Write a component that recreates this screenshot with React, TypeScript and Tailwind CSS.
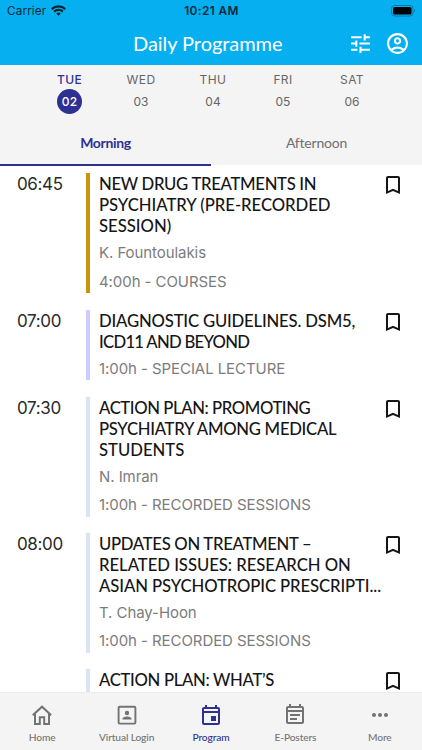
import type { ReactNode } from "react"
import {
  MdBookmarkBorder,
  MdMoreHoriz,
  MdOutlineAccountCircle,
  MdOutlineEvent,
  MdOutlineEventNote,
  MdTune,
} from "react-icons/md"
import { clsx } from "clsx"

type TitleLine = { text: string; tracking?: string }

type Session = {
  time?: string
  bar: string
  title: TitleLine[]
  speaker?: string
  info?: string
}

const days = [
  { name: "TUE", date: "02", width: "w-[71px]" },
  { name: "WED", date: "03", width: "w-[72px]" },
  { name: "THU", date: "04", width: "w-[72px]" },
  { name: "FRI", date: "05", width: "w-[68px]" },
  { name: "SAT", date: "06", width: "w-[70px]" },
]

const sessions: Session[] = [
  {
    time: "06:45",
    bar: "bg-[#c8960c]",
    title: [
      { text: "NEW DRUG TREATMENTS IN", tracking: "tracking-[-0.3px]" },
      { text: "PSYCHIATRY (PRE-RECORDED", tracking: "tracking-[-0.03px]" },
      { text: "SESSION)" },
    ],
    speaker: "K. Fountoulakis",
    info: "4:00h - COURSES",
  },
  {
    time: "07:00",
    bar: "bg-[#ccccff]",
    title: [
      { text: "DIAGNOSTIC GUIDELINES. DSM5,", tracking: "tracking-[-0.18px]" },
      { text: "ICD11 AND BEYOND", tracking: "tracking-[-0.72px]" },
    ],
    info: "1:00h - SPECIAL LECTURE",
  },
  {
    time: "07:30",
    bar: "bg-[#dae5f3]",
    title: [
      { text: "ACTION PLAN: PROMOTING", tracking: "tracking-[-0.41px]" },
      { text: "PSYCHIATRY AMONG MEDICAL", tracking: "tracking-[-0.29px]" },
      { text: "STUDENTS" },
    ],
    speaker: "N. Imran",
    info: "1:00h - RECORDED SESSIONS",
  },
  {
    time: "08:00",
    bar: "bg-[#dae5f3]",
    title: [
      { text: "UPDATES ON TREATMENT –", tracking: "tracking-[-0.3px]" },
      { text: "RELATED ISSUES: RESEARCH ON", tracking: "tracking-[-0.03px]" },
      { text: "ASIAN PSYCHOTROPIC PRESCRIPTI...", tracking: "tracking-[-0.1px]" },
    ],
    speaker: "T. Chay-Hoon",
    info: "1:00h - RECORDED SESSIONS",
  },
  {
    bar: "bg-[#dae5f3]",
    title: [{ text: "ACTION PLAN: WHAT’S", tracking: "tracking-[-0.32px]" }],
  },
]

function StatusBar() {
  return (
    <div className="grid h-[22px] grid-cols-3 items-center pr-[6px] pl-[7px] text-[#06283a]">
      <div className="flex items-center gap-[5px]">
        <span className="pt-px text-[11.7px] tracking-[0.15px]">Carrier</span>
        <svg width="15" height="11" viewBox="0 0 15 11" fill="none" stroke="#06202e" strokeWidth="2.2">
          <path d="M0.8 4.1a9.6 9.6 0 0 1 13.4 0" />
          <path d="M3.2 6.6a6.2 6.2 0 0 1 8.6 0" />
          <path d="M7.5 10.8 5.3 8.5a3.2 3.2 0 0 1 4.4 0z" fill="#06202e" stroke="none" />
        </svg>
      </div>
      <span className="pt-px text-center text-[11.8px] font-semibold tracking-[0.4px]">10:21 AM</span>
      <svg className="justify-self-end" width="25" height="12" viewBox="0 0 25 12">
        <rect x="0.5" y="0.5" width="21.5" height="10.5" rx="3" fill="none" stroke="#0778a5" />
        <rect x="2" y="2" width="18.5" height="7.5" rx="1.6" fill="#000" />
        <path d="M23.2 4v3.6c1.3-.6 1.3-3 0-3.6z" fill="#0778a5" />
      </svg>
    </div>
  )
}

function HomeIcon() {
  return (
    <svg width="24" height="24" viewBox="0 0 24 24" fill="none" stroke="currentColor" strokeWidth="2">
      <path d="M2.8 12.2 12 3.7l9.2 8.5" />
      <path d="M5 10.5V21h4.8v-6.8h4.4V21H19V10.5" />
    </svg>
  )
}

function PortraitIcon() {
  return (
    <svg width="24" height="24" viewBox="0 0 24 24" fill="currentColor">
      <rect x="3.6" y="3.8" width="16.8" height="16.8" rx="1" fill="none" stroke="currentColor" strokeWidth="1.9" />
      <circle cx="12" cy="10" r="2.2" />
      <path d="M7.5 16.5v-.8c0-1.5 3-2.3 4.5-2.3s4.5.8 4.5 2.3v.8z" />
    </svg>
  )
}

function Detail({ children }: { children: ReactNode }) {
  return (
    <p className="mt-[5px] h-[23.5px] text-[15px] leading-[23px] tracking-[-0.07px] text-[#7c7c7c]">
      {children}
    </p>
  )
}

function SessionRow({ session }: { session: Session }) {
  return (
    <li className="mb-[16.4px] flex">
      <div className="w-[86px] shrink-0 pl-[17px] text-[17px] leading-[22px] tracking-[-0.35px] text-[#2a2a2a]">
        {session.time}
      </div>
      <div className={clsx("w-1 shrink-0", session.bar)} />
      <div className="min-w-0 flex-1 pl-[9px]">
        <h2 className="font-[Lato,sans-serif] text-[16.7px] leading-[21px] font-medium whitespace-nowrap text-[#161616]">
          {session.title.map((line) => (
            <span key={line.text} className={clsx("block h-[21px] pt-px", line.tracking)}>
              {line.text}
            </span>
          ))}
        </h2>
        {session.speaker && <Detail>{session.speaker}</Detail>}
        {session.info && <Detail>{session.info}</Detail>}
      </div>
      <div className="flex w-[41px] shrink-0">
        <MdBookmarkBorder className="size-[24px]" />
      </div>
    </li>
  )
}

function TabItem({ icon, label, active }: { icon: ReactNode; label: string; active?: boolean }) {
  return (
    <div
      className={clsx(
        "flex flex-1 flex-col items-center pt-[10px] text-[24px]",
        active ? "text-[#2e3192]" : "text-[#737373]"
      )}
    >
      {icon}
      <span className="mt-[3px] font-[Lato,sans-serif] text-[10.2px] leading-[14px] font-medium tracking-[-0.12px]">
        {label}
      </span>
    </div>
  )
}

export default function App() {
  return (
    <main className="flex h-[750px] w-[422px] flex-col overflow-hidden bg-white font-[Inter,sans-serif]">
      <header className="h-[65px] shrink-0 bg-[#05aff0]">
        <StatusBar />
        <div className="flex h-[43px] items-center pr-[12px] pl-[133px] text-white">
          <h1 className="pb-[2px] font-[Lato,sans-serif] text-[20px] tracking-[-0.05px]">Daily Programme</h1>
          <div className="ml-auto flex items-center gap-[12px]">
            <MdTune className="size-[25px]" />
            <MdOutlineAccountCircle className="size-[25px]" />
          </div>
        </div>
      </header>

      <nav className="flex h-[100px] shrink-0 flex-col bg-[#f4f4f4]">
        <div className="flex pt-[7px] pl-[34px]">
          {days.map((day, i) => (
            <div
              key={day.name}
              className={clsx(
                "flex flex-col items-center text-[12px] tracking-[0.4px]",
                day.width,
                i === 0 ? "text-[#2e3192]" : "text-[#666]"
              )}
            >
              <span className={clsx("leading-[15px]", i === 0 && "font-medium")}>{day.name}</span>
              <span
                className={clsx(
                  "mt-[2px] flex size-[25px] items-center justify-center rounded-full tracking-[0.1px]",
                  i === 0 && "bg-[#2e3192] font-medium text-white"
                )}
              >
                {day.date}
              </span>
            </div>
          ))}
        </div>
        <div className="mt-auto grid h-[44px] grid-cols-2 text-center font-[Lato,sans-serif] text-[14px] leading-[43px]">
          <div className="border-b-2 border-[#2e3192] font-bold tracking-[-0.35px] text-[#2e3192]">Morning</div>
          <div className="tracking-[-0.2px] text-[#6f6f6f]">Afternoon</div>
        </div>
      </nav>

      <ul className="min-h-0 flex-1 overflow-hidden pt-[8.3px] text-[#161616]">
        {sessions.map((session) => (
          <SessionRow key={session.title[0].text} session={session} />
        ))}
      </ul>

      <footer className="flex h-[58px] shrink-0 border-t border-[#ececec] bg-[#f4f4f4]">
        <TabItem icon={<HomeIcon />} label="Home" />
        <TabItem icon={<PortraitIcon />} label="Virtual Login" />
        <TabItem icon={<MdOutlineEvent />} label="Program" active />
        <TabItem icon={<MdOutlineEventNote />} label="E-Posters" />
        <TabItem icon={<MdMoreHoriz />} label="More" />
      </footer>
    </main>
  )
}
